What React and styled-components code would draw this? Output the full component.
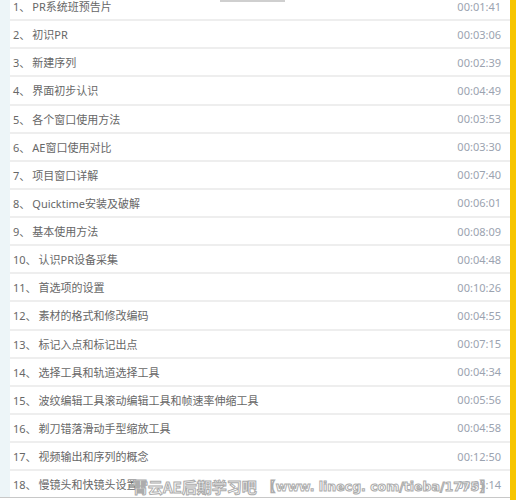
import React from 'react';
import styled, { createGlobalStyle } from 'styled-components';

const lessons = [
	['PR系统班预告片', '00:01:41'],
	['初识PR', '00:03:06'],
	['新建序列', '00:02:39'],
	['界面初步认识', '00:04:49'],
	['各个窗口使用方法', '00:03:53'],
	['AE窗口使用对比', '00:03:30'],
	['项目窗口详解', '00:07:40'],
	['Quicktime安装及破解', '00:06:01'],
	['基本使用方法', '00:08:09'],
	['认识PR设备采集', '00:04:48'],
	['首选项的设置', '00:10:26'],
	['素材的格式和修改编码', '00:04:55'],
	['标记入点和标记出点', '00:07:15'],
	['选择工具和轨道选择工具', '00:04:34'],
	['波纹编辑工具滚动编辑工具和帧速率伸缩工具', '00:05:56'],
	['剃刀错落滑动手型缩放工具', '00:04:58'],
	['视频输出和序列的概念', '00:12:50'],
	['慢镜头和快镜头设置', '00:05:14'],
];

const GlobalStyle = createGlobalStyle`
	html, body {
		margin: 0;
		padding: 0;
		background: #ffffff;
		overflow: hidden;
	}
	body {
		font-family: "Noto Sans", "Noto Sans CJK SC", sans-serif;
	}
`;

const Page = styled.div`
	position: relative;
	display: flex;
	width: 516px;
	height: 500px;
	overflow: hidden;
`;

const Panel = styled.div`
	display: flex;
	flex: 1;
	height: 497px;
	border-bottom: 1px solid #c8c8c8;
	overflow: hidden;
`;

const SideStrip = styled.div`
	width: 10px;
	background: #edf5f8;
`;

const List = styled.ul`
	flex: 1;
	list-style: none;
	margin: -7px 0 0;
	padding: 0;
`;

const Row = styled.li`
	display: flex;
	align-items: center;
	justify-content: space-between;
	box-sizing: border-box;
	height: 28.125px;
	padding: 0 9px 0 3px;
	border-bottom: 2px solid #eeeeee;
	font-size: 11px;
`;

const Title = styled.span`
	color: #676767;
	white-space: nowrap;
`;

const Num = styled.span`
	margin-right: 2px;
`;

const Time = styled.span`
	color: #9ba3b0;
	font-family: "Noto Sans", sans-serif;
`;

const YellowBar = styled.div`
	width: 6px;
	background: #f7c500;
`;

const Handle = styled.div`
	position: absolute;
	top: 0;
	left: 220px;
	width: 65px;
	height: 2px;
	background: #cfcfcf;
`;

const Watermark = styled.div`
	position: absolute;
	left: 133px;
	top: 477px;
	display: flex;
	gap: 6px;
	font-family: "Noto Sans CJK SC", "Noto Sans", sans-serif;
	font-size: 15px;
	font-weight: 700;
	line-height: 20px;
	color: #ffffff;
	-webkit-text-stroke: 1px #acacac;
	white-space: nowrap;
`;

const Url = styled.span`
	font-family: "DejaVu Sans", sans-serif;
	font-size: 12.5px;
`;

export default function App() {
	return (
		<Page>
			<GlobalStyle />
			<Panel>
				<SideStrip />
				<List>
					{lessons.map(([title, time], i) => (
						<Row key={i}>
							<Title>
								<Num>{i + 1}、</Num>
								{title}
							</Title>
							<Time>{time}</Time>
						</Row>
					))}
				</List>
			</Panel>
			<YellowBar />
			<Handle />
			<Watermark>
				<span>霄云AE后期学习吧</span>
				<Url>【www. linecg. com/tieba/1775】</Url>
			</Watermark>
		</Page>
	);
}
